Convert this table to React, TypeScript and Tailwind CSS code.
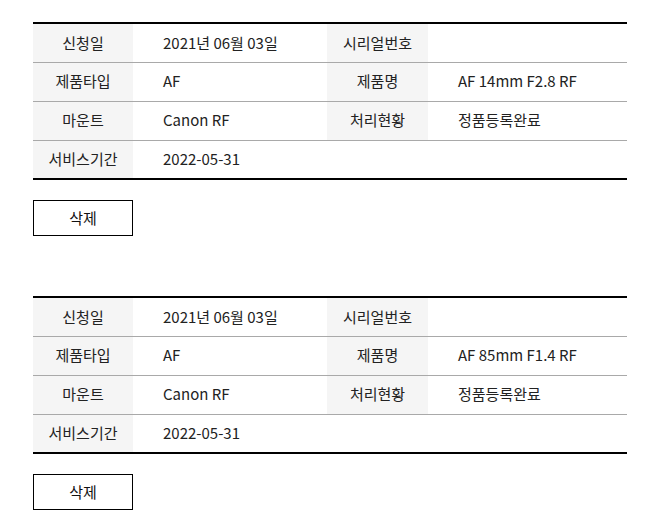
import React from "react";

type Item = {
  date: string;
  serial: string;
  type: string;
  product: string;
  mount: string;
  status: string;
  period: string;
};

const items: Item[] = [
  {
    date: "2021년 06월 03일",
    serial: "",
    type: "AF",
    product: "AF 14mm F2.8 RF",
    mount: "Canon RF",
    status: "정품등록완료",
    period: "2022-05-31",
  },
  {
    date: "2021년 06월 03일",
    serial: "",
    type: "AF",
    product: "AF 85mm F1.4 RF",
    mount: "Canon RF",
    status: "정품등록완료",
    period: "2022-05-31",
  },
];

function Label({ children }: { children: React.ReactNode }) {
  return <th className="h-[39px] bg-[#f5f5f5] text-center font-normal">{children}</th>;
}

function Value({ children, span }: { children?: React.ReactNode; span?: number }) {
  return (
    <td colSpan={span} className="h-[39px] pl-[30px] text-left">
      {children}
    </td>
  );
}

function WarrantyCard({ item }: { item: Item }) {
  return (
    <div className="mb-[60px]">
      <table className="w-full table-fixed border-collapse border-y-2 border-black">
        <colgroup>
          <col className="w-[100px]" />
          <col className="w-[194px]" />
          <col className="w-[101px]" />
          <col />
        </colgroup>
        <tbody>
          <tr className="border-b border-[#a9a9a9]">
            <Label>신청일</Label>
            <Value>{item.date}</Value>
            <Label>시리얼번호</Label>
            <Value>{item.serial}</Value>
          </tr>
          <tr className="border-b border-[#a9a9a9]">
            <Label>제품타입</Label>
            <Value>{item.type}</Value>
            <Label>제품명</Label>
            <Value>{item.product}</Value>
          </tr>
          <tr className="border-b border-[#a9a9a9]">
            <Label>마운트</Label>
            <Value>{item.mount}</Value>
            <Label>처리현황</Label>
            <Value>{item.status}</Value>
          </tr>
          <tr>
            <Label>서비스기간</Label>
            <Value span={3}>{item.period}</Value>
          </tr>
        </tbody>
      </table>
      <button className="mt-5 flex h-9 w-[100px] items-center justify-center border border-black bg-white text-[15px] text-[#111]">
        삭제
      </button>
    </div>
  );
}

export default function App() {
  return (
    <div
      className="min-h-screen bg-white px-[33px] pt-[22px] text-[15px] text-[#222]"
      style={{ fontFamily: '"Noto Sans CJK KR", "Noto Sans", sans-serif' }}
    >
      {items.map((item, i) => (
        <WarrantyCard key={i} item={item} />
      ))}
    </div>
  );
}
